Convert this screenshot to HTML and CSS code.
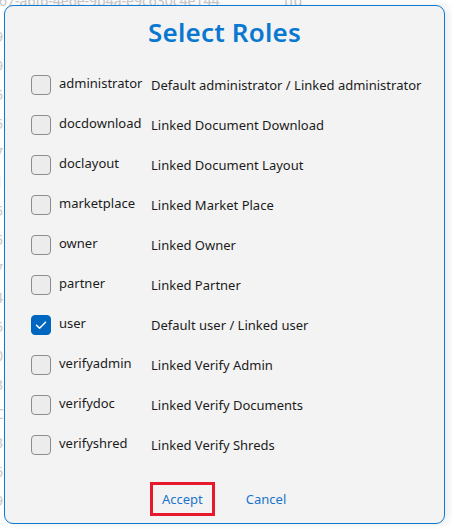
FILE: index.html
```html
<!DOCTYPE html>
<html>
<head>
<meta charset="utf-8">
<link rel="stylesheet" href="styles.css">
</head>
<body>
<div class="backdrop">
  <div class="bg-line bg-top"><span class="bg-id">…67-a6f6-4e6e-9b4a-e9c630c4e144</span><span class="bg-tfd">tfd</span></div>
  <div class="bg-col">
    <span>9</span><span>9</span><span>5</span><span>5</span><span>7</span><span>1</span><span>5</span><span>5</span><span>7</span><span>4</span><span>5</span><span>0</span><span>3</span><span>C</span><span>3</span><span>6</span><span>9</span>
  </div>
</div>
<div class="dialog">
  <h1 class="title">Select Roles</h1>
  <ul class="roles">
    <li class="role"><span class="box"></span><span class="name">administrator</span><span class="desc">Default administrator / Linked administrator</span></li>
    <li class="role"><span class="box"></span><span class="name">docdownload</span><span class="desc">Linked Document Download</span></li>
    <li class="role"><span class="box"></span><span class="name">doclayout</span><span class="desc">Linked Document Layout</span></li>
    <li class="role"><span class="box"></span><span class="name">marketplace</span><span class="desc">Linked Market Place</span></li>
    <li class="role"><span class="box"></span><span class="name">owner</span><span class="desc">Linked Owner</span></li>
    <li class="role"><span class="box"></span><span class="name">partner</span><span class="desc">Linked Partner</span></li>
    <li class="role"><span class="box checked"><svg viewBox="0 0 20 20" width="20" height="20"><path d="M5.5 10.3 L8.6 13.3 L14.5 7.2" fill="none" stroke="#fff" stroke-width="1.5" stroke-linecap="round" stroke-linejoin="round"/></svg></span><span class="name">user</span><span class="desc">Default user / Linked user</span></li>
    <li class="role"><span class="box"></span><span class="name">verifyadmin</span><span class="desc">Linked Verify Admin</span></li>
    <li class="role"><span class="box"></span><span class="name">verifydoc</span><span class="desc">Linked Verify Documents</span></li>
    <li class="role"><span class="box"></span><span class="name">verifyshred</span><span class="desc">Linked Verify Shreds</span></li>
  </ul>
  <div class="actions">
    <button class="btn btn-accept">Accept</button>
    <button class="btn">Cancel</button>
  </div>
</div>
</body>
</html>
```
FILE: styles.css
```css
html, body {
  margin: 0;
  padding: 0;
  background: #ffffff;
  width: 452px;
  height: 529px;
  overflow: hidden;
  font-family: "Noto Sans", "Open Sans", sans-serif;
}

.backdrop {
  position: absolute;
  inset: 0;
  color: #c8c8c8;
  font-size: 14px;
}

.bg-line {
  position: absolute;
  top: -9px;
  left: 0;
  width: 452px;
  white-space: nowrap;
}

.bg-id {
  position: absolute;
  left: -12px;
}

.bg-tfd {
  position: absolute;
  left: 284px;
}

.bg-col {
  position: absolute;
  left: -5px;
  top: 22px;
  display: flex;
  flex-direction: column;
  line-height: 29px;
}

.dialog {
  position: absolute;
  left: 4px;
  top: 5px;
  width: 441px;
  height: 519px;
  box-sizing: border-box;
  border: 1px solid #0f78d2;
  border-radius: 9px;
  background: #f3f3f3;
  display: flex;
  flex-direction: column;
  box-shadow: 4px 0 10px rgba(0,0,0,0.08);
}

.title {
  margin: 9px 0 0;
  text-align: center;
  color: #0a78d0;
  font-size: 26px;
  font-weight: 600;
  line-height: 34px;
  letter-spacing: 0.2px;
}

.roles {
  list-style: none;
  margin: 16px 0 0;
  padding: 0 0 0 26px;
  display: flex;
  flex-direction: column;
}

.role {
  display: flex;
  align-items: center;
  height: 40px;
  font-size: 13px;
  color: #1b1b1b;
}

.box {
  width: 20px;
  height: 20px;
  box-sizing: border-box;
  border: 1px solid #8c8c8c;
  border-radius: 4px;
  background: #ececec;
  flex: none;
  display: flex;
}

.box.checked {
  background: #0067c0;
  border-color: #0067c0;
}

.box.checked svg {
  margin: -1px;
}

.name {
  margin-left: 8px;
  width: 92px;
  flex: none;
  position: relative;
  top: -2px;
  white-space: nowrap;
}

.desc {
  white-space: nowrap;
  position: relative;
  top: 0px;
}

.actions {
  margin-top: auto;
  margin-bottom: 7px;
  display: flex;
  padding-left: 145px;
  gap: 19px;
}

.btn {
  font-family: inherit;
  font-size: 13px;
  color: #1a74cc;
  background: transparent;
  border: 3px solid transparent;
  height: 34px;
  padding: 0 9px;
  cursor: pointer;
}

.btn-accept {
  border-color: #e8192c;
}
```
